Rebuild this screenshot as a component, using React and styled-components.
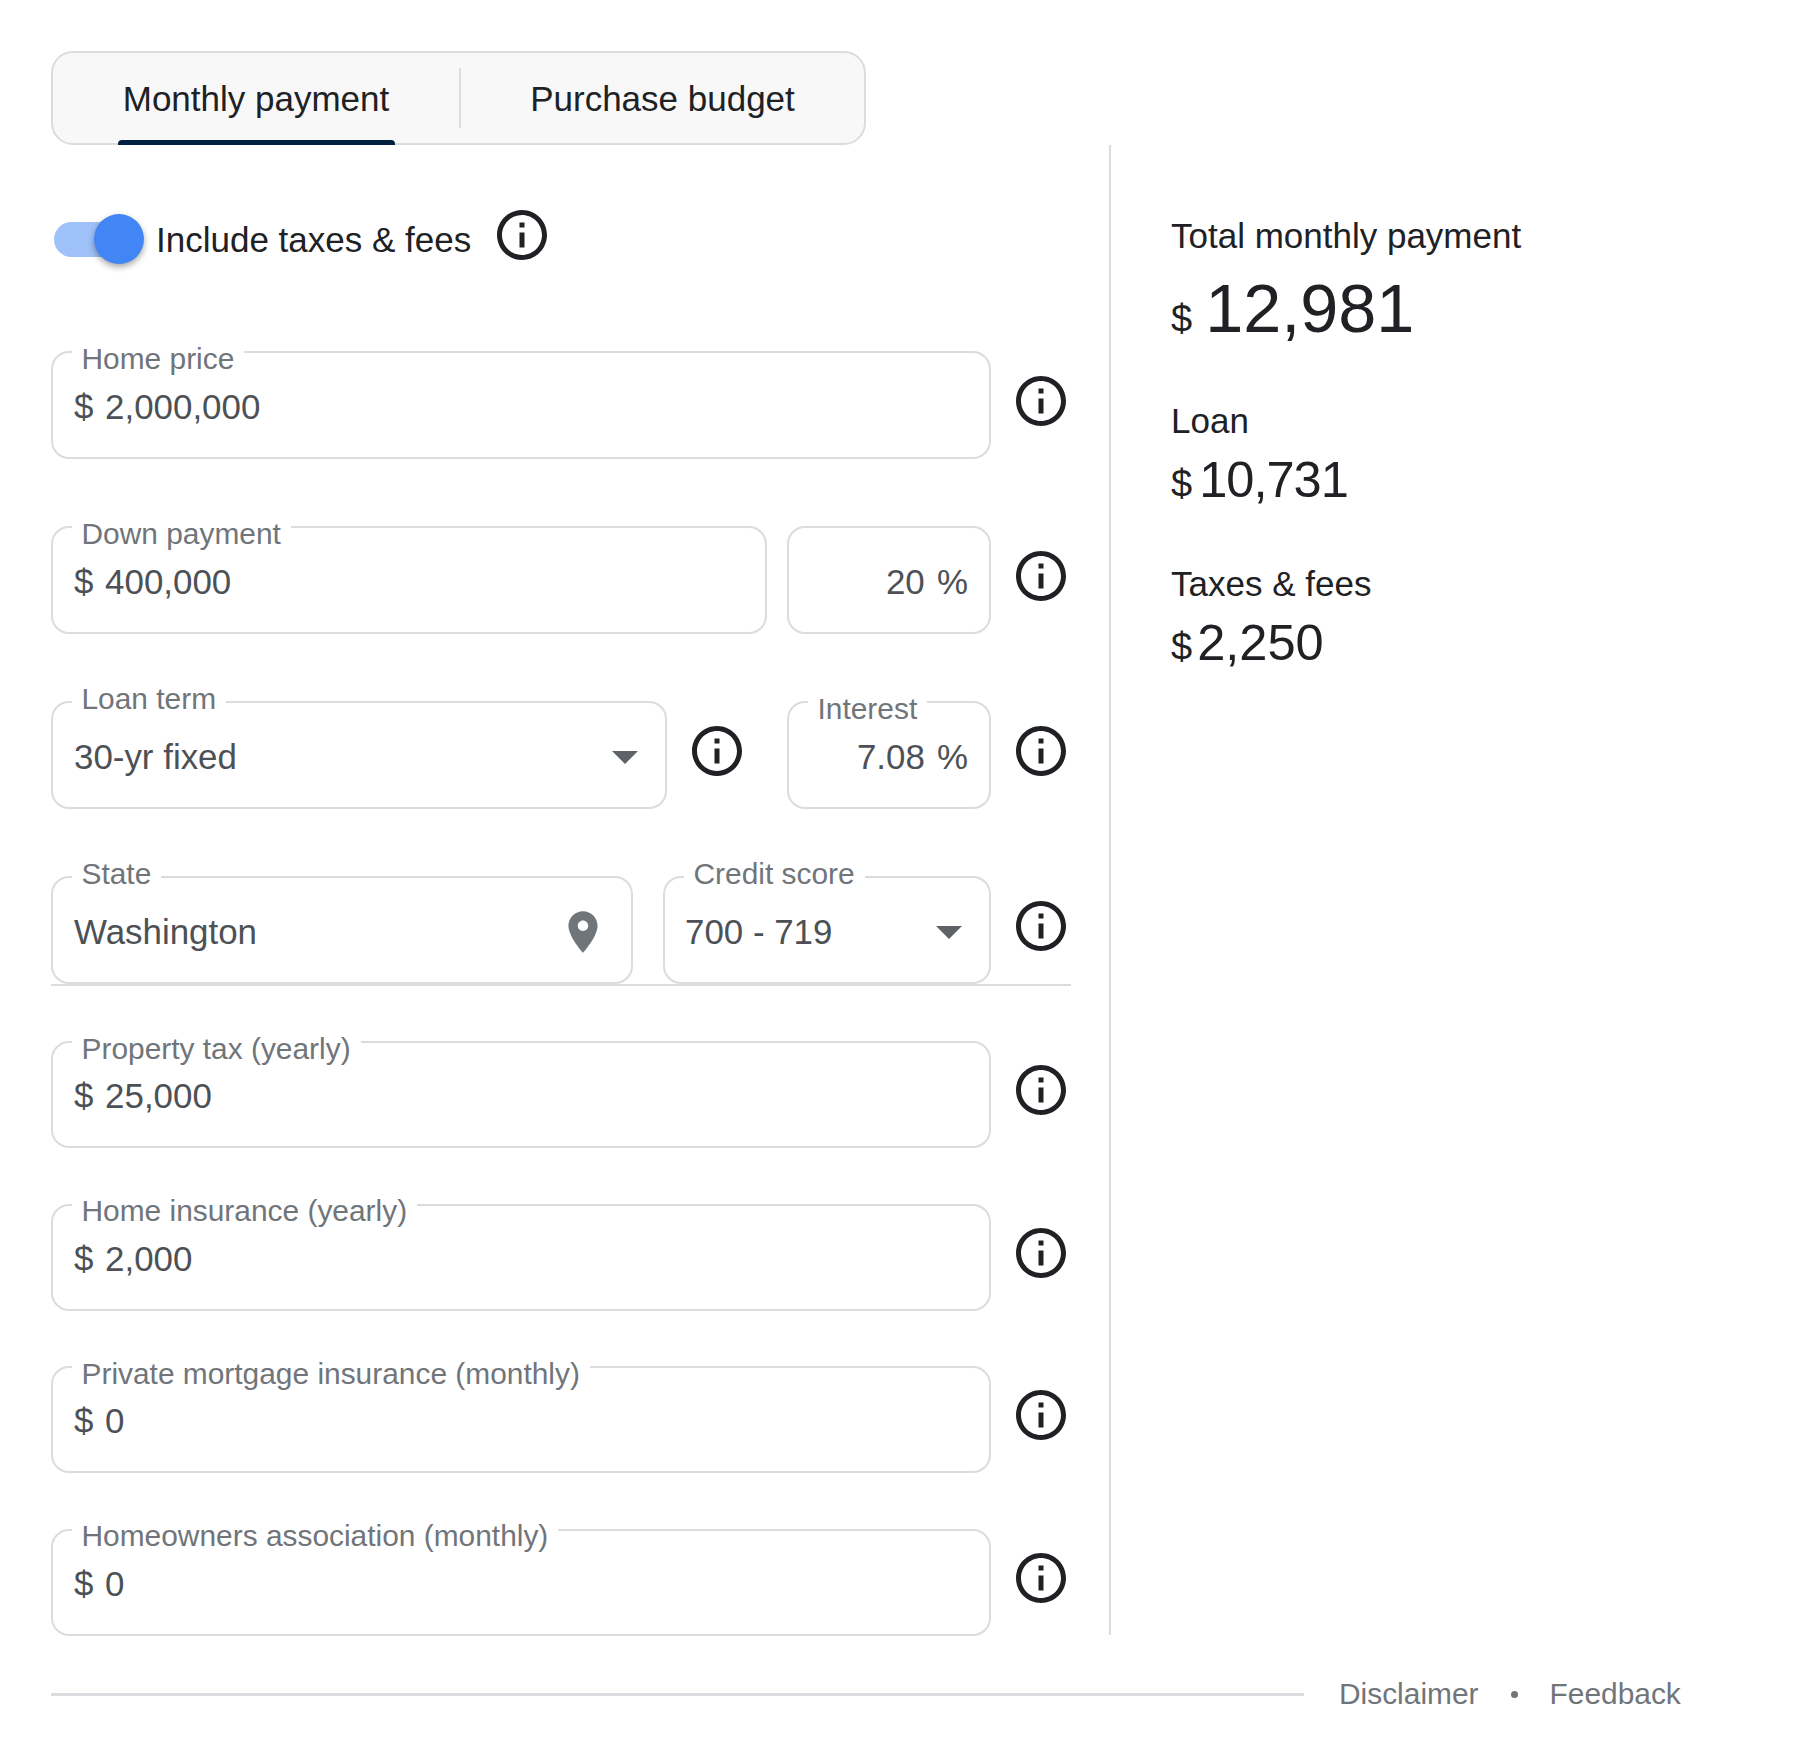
import React from "react";
import styled, { createGlobalStyle } from "styled-components";

const Global = createGlobalStyle`
  html, body { margin: 0; padding: 0; background: #fff; }
  body { font-family: "Liberation Sans", Arial, sans-serif; color: #202124; }
  * { box-sizing: border-box; }
`;

const Page = styled.div`
  width: 1804px;
  height: 1747px;
  padding: 51px 0 0 51px;
  display: flex;
  flex-direction: column;
`;

const TabBar = styled.div`
  width: 815px;
  height: 94px;
  flex: none;
  display: flex;
  align-items: stretch;
  background: #f8f8f8;
  border: 2px solid #dadce0;
  border-radius: 22px;
`;

const Tab = styled.button`
  position: relative;
  width: ${(p) => p.$w}px;
  border: 0;
  background: none;
  padding: 0;
  font: 400 35px/92px "Liberation Sans", Arial, sans-serif;
  color: #202124;
  text-align: center;
  &::after {
    content: "";
    display: ${(p) => (p.$active ? "block" : "none")};
    position: absolute;
    left: 65px;
    right: 64px;
    bottom: -2px;
    height: 5px;
    background: #012040;
    border-radius: 4px 4px 0 0;
  }
`;

const TabDivider = styled.span`
  width: 2px;
  height: 60px;
  margin-top: 15px;
  background: #dadce0;
`;

const Main = styled.div`
  display: flex;
  flex: none;
`;

const Left = styled.div`
  width: 1060px;
  height: 1490px;
  border-right: 2px solid #dadce0;
  display: flex;
  flex-direction: column;
`;

const ToggleRow = styled.div`
  flex: none;
  display: flex;
  align-items: flex-start;
  height: 206px;
  padding-top: 61px;
`;

const Switch = styled.span`
  position: relative;
  display: block;
  width: 88px;
  height: 35px;
  margin: 16px 0 0 3px;
  background: #9fc1f9;
  border-radius: 18px;
  &::after {
    content: "";
    position: absolute;
    left: 40px;
    top: -8px;
    width: 50px;
    height: 50px;
    border-radius: 50%;
    background: #4285f4;
    box-shadow: 0 3px 6px rgba(0, 0, 0, 0.35);
  }
`;

const ToggleLabel = styled.span`
  margin: 14px 21px 0 14px;
  font-size: 35px;
  line-height: 40px;
  color: #202124;
`;

const Group = styled.div`
  flex: none;
  display: flex;
  flex-direction: column;
  gap: ${(p) => p.$gap}px;
`;

const Row = styled.div`
  display: flex;
  align-items: flex-start;
  width: 1020px;
`;

const Field = styled.div`
  position: relative;
  flex: ${(p) => (p.$w ? `0 0 ${p.$w}px` : "1 1 0")};
  height: ${(p) => (p.$tall ? 108 : 107)}px;
  margin-left: ${(p) => p.$ml || 0}px;
  padding: ${(p) => (p.$tall ? 1 : 0)}px 21px 0 ${(p) => p.$pl || 21}px;
  border: 2px solid #dadce0;
  border-radius: 18px;
  background: #fff;
  display: flex;
  align-items: center;
  justify-content: ${(p) => (p.$right ? "flex-end" : "space-between")};
`;

const FieldLabel = styled.span`
  position: absolute;
  left: 18.5px;
  top: ${(p) => p.$top}px;
  padding: 0 10px;
  background: #fff;
  font-size: 29.9px;
  line-height: 34px;
  color: #70757a;
  white-space: nowrap;
`;

const Value = styled.span`
  font-size: 34.9px;
  line-height: 40px;
  margin-top: 3px;
  color: #4d5156;
  white-space: nowrap;
  word-spacing: ${(p) => p.$ws || 0}px;
`;

const Caret = styled.span`
  width: 0;
  height: 0;
  margin: 3px 6px 0 0;
  border-left: 13px solid transparent;
  border-right: 13px solid transparent;
  border-top: 13px solid #5f6368;
`;

const InfoSlot = styled.span`
  flex: 0 0 60px;
  width: 60px;
  height: 60px;
  margin: ${(p) => p.$m || "19px 0 0 20px"};
  color: #202124;
`;

const PinIcon = styled.svg`
  flex: none;
  margin: 2px 2px 0 0;
`;

const Rule = styled.div`
  flex: none;
  width: 1020px;
  height: 2px;
  margin: 0 0 55px 0;
  background: #dadce0;
`;

const Right = styled.div`
  padding: 0 0 0 60px;
  display: flex;
  flex-direction: column;
`;

const SumLabel = styled.div`
  font-size: 35px;
  line-height: 40px;
  margin-top: ${(p) => p.$mt}px;
  color: #202124;
`;

const SumValue = styled.div`
  display: flex;
  align-items: baseline;
  margin-top: ${(p) => p.$mt}px;
  font-size: ${(p) => p.$size}px;
  line-height: ${(p) => p.$lh}px;
  letter-spacing: ${(p) => p.$ls || 0}px;
  color: #202124;
`;

const Dollar = styled.span`
  font-size: 38px;
  letter-spacing: 0;
  margin-right: ${(p) => p.$mr}px;
`;

const Footer = styled.div`
  width: 1700px;
  margin-top: 42px;
  display: flex;
  align-items: center;
  height: 34px;
`;

const FooterLine = styled.div`
  width: 1253px;
  height: 3px;
  background: #dadce0;
  margin-right: 35px;
`;

const FooterLink = styled.a`
  font-size: 29.9px;
  line-height: 34px;
  color: #70757a;
`;

const Dot = styled.span`
  width: 7px;
  height: 7px;
  margin: 0 32px 0 32px;
  border-radius: 50%;
  background: #70757a;
`;

const Info = ({ m }) => (
  <InfoSlot $m={m}>
    <svg width="60" height="60" viewBox="0 0 24 24" fill="currentColor" aria-hidden="true">
      <path d="M11 7h2v2h-2zm0 4h2v6h-2zm1-9C6.48 2 2 6.48 2 12s4.48 10 10 10 10-4.48 10-10S17.52 2 12 2zm0 18c-4.41 0-8-3.59-8-8s3.59-8 8-8 8 3.59 8 8-3.59 8-8 8z" />
    </svg>
  </InfoSlot>
);

const Pin = () => (
  <PinIcon width="50" height="50" viewBox="0 0 24 24" fill="#70757a" aria-hidden="true">
    <path d="M12 2C8.13 2 5 5.13 5 9c0 5.25 7 13 7 13s7-7.75 7-13c0-3.87-3.13-7-7-7zm0 9.5c-1.38 0-2.5-1.12-2.5-2.5s1.12-2.5 2.5-2.5 2.5 1.12 2.5 2.5-1.12 2.5-2.5 2.5z" />
  </PinIcon>
);

const TALL_INFO = "20px 0 0 20px";

const Money = ({ label, value, tall }) => (
  <Row>
    <Field $tall={tall}>
      <FieldLabel $top={tall ? -11 : -11.5}>{label}</FieldLabel>
      <Value $ws={2}>$ {value}</Value>
    </Field>
    <Info m={tall ? TALL_INFO : undefined} />
  </Row>
);

export default function App() {
  return (
    <Page>
      <Global />
      <TabBar>
        <Tab $active $w={406}>Monthly payment</Tab>
        <TabDivider />
        <Tab $w={403}>Purchase budget</Tab>
      </TabBar>
      <Main>
        <Left>
          <ToggleRow>
            <Switch />
            <ToggleLabel>Include taxes &amp; fees</ToggleLabel>
            <Info m="-1px 0 0 0" />
          </ToggleRow>
          <Group $gap={67}>
            <Money tall label="Home price" value="2,000,000" />
            <Row>
              <Field $tall $w={716}>
                <FieldLabel $top={-11}>Down payment</FieldLabel>
                <Value $ws={2}>$ 400,000</Value>
              </Field>
              <Field $tall $w={204} $ml={20} $right>
                <Value $ws={2.5}>20 %</Value>
              </Field>
              <Info m={TALL_INFO} />
            </Row>
            <Row>
              <Field $tall $w={616}>
                <FieldLabel $top={-21}>Loan term</FieldLabel>
                <Value>30-yr fixed</Value>
                <Caret />
              </Field>
              <Info m={TALL_INFO} />
              <Field $tall $w={204} $ml={40} $right>
                <FieldLabel $top={-11}>Interest</FieldLabel>
                <Value $ws={2.5}>7.08 %</Value>
              </Field>
              <Info m={TALL_INFO} />
            </Row>
            <Row>
              <Field $tall $w={582}>
                <FieldLabel $top={-21}>State</FieldLabel>
                <Value>Washington</Value>
                <Pin />
              </Field>
              <Field $tall $w={328} $ml={30} $pl={20}>
                <FieldLabel $top={-21}>Credit score</FieldLabel>
                <Value>700 - 719</Value>
                <Caret />
              </Field>
              <Info m={TALL_INFO} />
            </Row>
          </Group>
          <Rule />
          <Group $gap={55.5}>
            <Money label="Property tax (yearly)" value="25,000" />
            <Money label="Home insurance (yearly)" value="2,000" />
            <Money label="Private mortgage insurance (monthly)" value="0" />
            <Money label="Homeowners association (monthly)" value="0" />
          </Group>
        </Left>
        <Right>
          <SumLabel $mt={71}>Total monthly payment</SumLabel>
          <SumValue $mt={12} $size={68.4} $lh={80}>
            <Dollar $mr={13}>$</Dollar>12,981
          </SumValue>
          <SumLabel $mt={42}>Loan</SumLabel>
          <SumValue $mt={9} $size={50.6} $lh={60} $ls={-1}>
            <Dollar $mr={7}>$</Dollar>10,731
          </SumValue>
          <SumLabel $mt={50}>Taxes &amp; fees</SumLabel>
          <SumValue $mt={9} $size={50.6} $lh={60}>
            <Dollar $mr={5}>$</Dollar>2,250
          </SumValue>
        </Right>
      </Main>
      <Footer>
        <FooterLine />
        <FooterLink>Disclaimer</FooterLink>
        <Dot />
        <FooterLink>Feedback</FooterLink>
      </Footer>
    </Page>
  );
}
